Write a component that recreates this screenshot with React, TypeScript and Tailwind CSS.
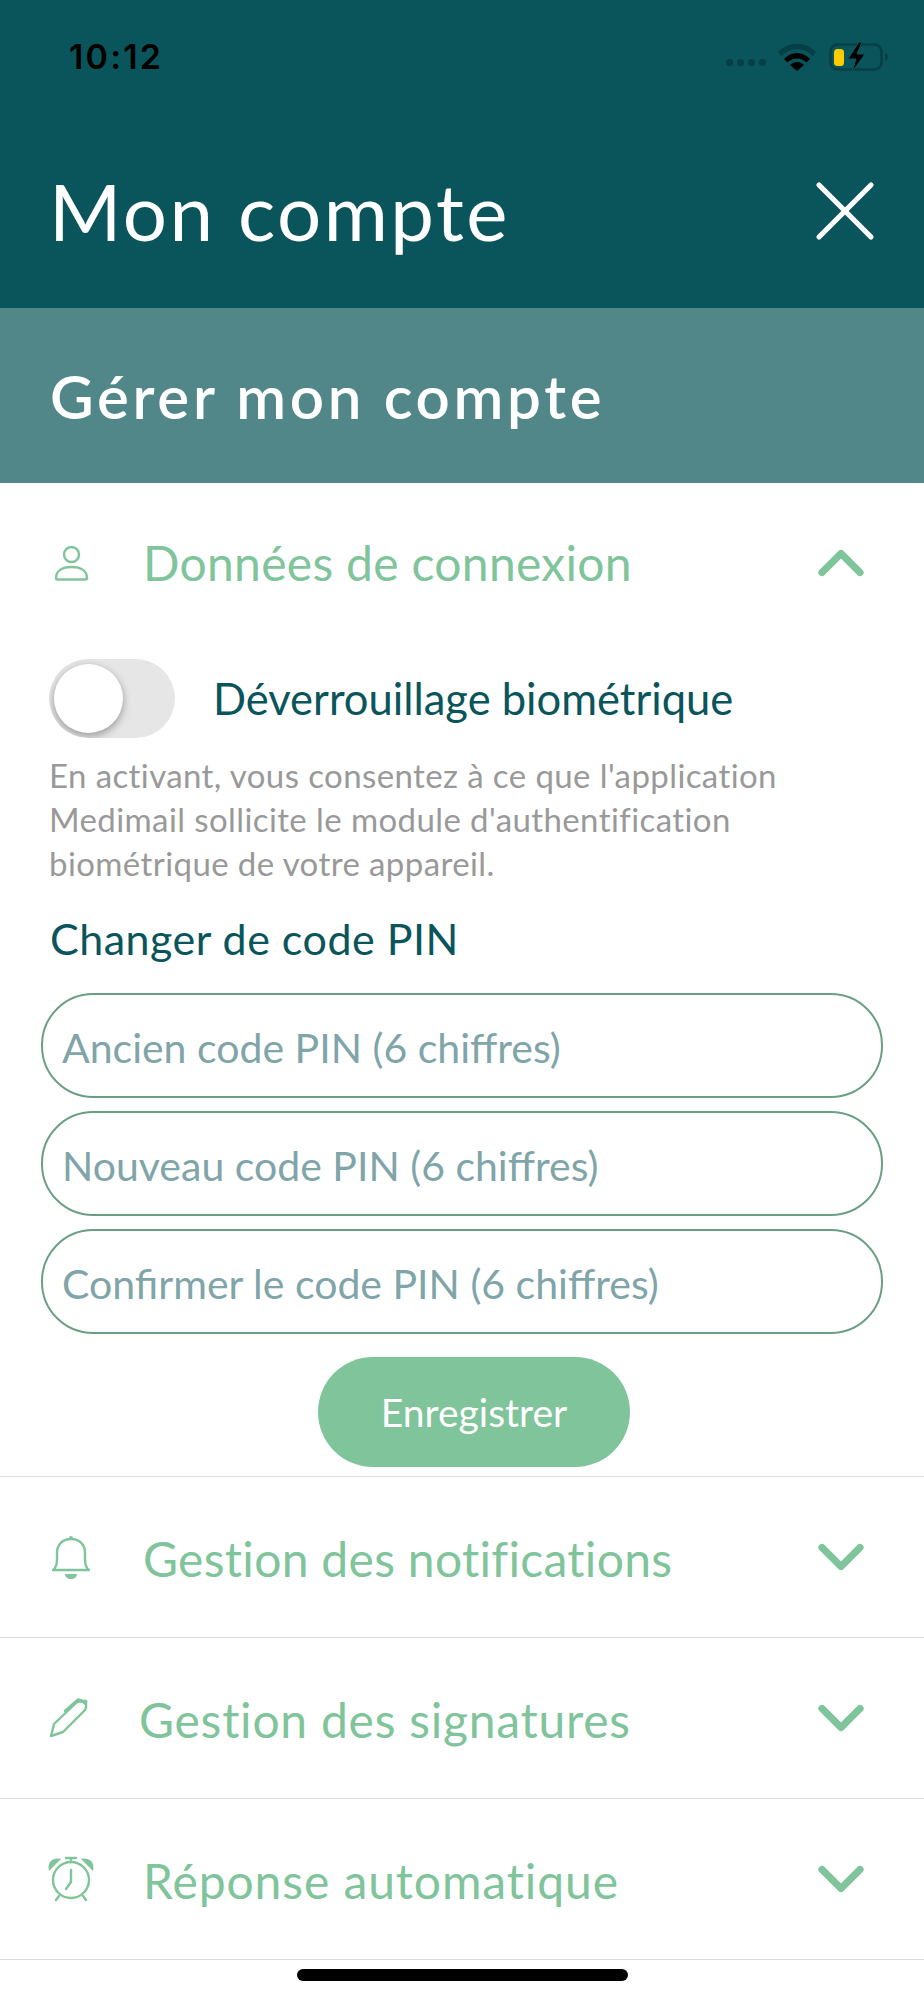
import { ChevronDown, ChevronUp, X } from "lucide-react";
import { ReactNode } from "react";

const UserIcon = () => (
  <svg width="35" height="36" viewBox="0 0 35 36" fill="none" stroke="#7fc49a" strokeWidth="2.4">
    <circle cx="17.5" cy="9.5" r="7.5" />
    <path d="M2 33c0-7 6-11 15.500-11S33 26 33 33c0 1-.5 1.500-1.500 1.500h-28C2.500 34.500 2 34 2 33z" strokeLinejoin="round" />
  </svg>
);

const BellIcon = () => (
  <svg width="38" height="45" viewBox="0 0 38 45" fill="none" stroke="#7fc49a" strokeWidth="2.4">
    <path d="M1 35h36c-3-2-4-5-4-11v-6C33 9 27 4 19 4S5 9 5 18v6c0 6-1 9-4 11z" strokeLinejoin="round" />
    <circle cx="19" cy="3" r="2" fill="#7fc49a" stroke="none" />
    <path d="M13 39h12c0 3-3 5-6 5s-6-2-6-5z" fill="#7fc49a" stroke="none" />
  </svg>
);

const PenIcon = () => (
  <svg width="40" height="40" viewBox="0 0 40 40" fill="none" stroke="#7fc49a" strokeWidth="2.4" strokeLinejoin="round" strokeLinecap="round" className="-ml-[5px]">
    <path d="M2 38l3-12L27 5c2-2 7-2 9 0 2 2 1 5 0 7L14 34z" />
    <path d="M16 13L29 1.500l4 1" />
    <circle cx="36" cy="4" r="2.500" fill="#7fc49a" stroke="none" />
  </svg>
);

const AlarmIcon = () => (
  <svg width="46" height="46" viewBox="0 0 46 46" fill="none" stroke="#7fc49a" strokeWidth="2.4" strokeLinecap="round">
    <circle cx="23" cy="24" r="18" />
    <path d="M23 14v12l-5 7" />
    <path d="M18 2h10M23 2v4" />
    <path d="M11 40l-3 4M35 40l3 4" />
    <path d="M1 15C-1 7 4 1 13 3z" fill="#7fc49a" stroke="none" />
    <path d="M45 15c2-8-3-14-12-12z" fill="#7fc49a" stroke="none" />
  </svg>
);

const AccordionRow = ({ icon, title, open, textClass }: { icon: ReactNode; title: string; open?: boolean; textClass: string }) => (
  <div className="flex items-center h-[160px] pl-[48px] pr-[45px] text-[#7fc49a]">
    <div className="w-[46px] flex justify-center shrink-0">{icon}</div>
    <span className={`text-[48px] leading-none ${textClass}`}>{title}</span>
    <span className="ml-auto">
      {open ? <ChevronUp size={76} strokeWidth={2.3} /> : <ChevronDown size={76} strokeWidth={2.3} />}
    </span>
  </div>
);

const PinInput = ({ placeholder }: { placeholder: string }) => (
  <input
    placeholder={placeholder}
    className="w-full h-[105px] rounded-[52px] border-[2.5px] border-[#6a9f83] pl-[19px] pt-[3px] text-[41px] bg-white outline-none placeholder:text-[#7fa5a9]"
  />
);

export default function App() {
  return (
    <div className="relative w-[924px] h-[2000px] bg-white overflow-hidden font-['Lato',sans-serif]">
      <header className="h-[308px] bg-[#0a555b] text-white">
        <div className="flex items-center justify-between h-[113px] pl-[69px] pr-[36px]">
          <span className="text-[34px] font-semibold text-black font-['Inter',sans-serif] tracking-[2.2px]">10:12</span>
          <div className="flex items-center">
            <div className="flex gap-[4px] mt-[12px] mr-[12px]">
              <i className="w-[7px] h-[7px] rounded-full bg-[#063f45]" />
              <i className="w-[7px] h-[7px] rounded-full bg-[#063f45]" />
              <i className="w-[7px] h-[7px] rounded-full bg-[#063f45]" />
              <i className="w-[7px] h-[7px] rounded-full bg-[#063f45]" />
            </div>
            <svg width="38" height="28" viewBox="0 0 38 28" className="mr-[13px]">
              <path d="M0 9C10-2 28-2 38 9l-3.500 4C26 4 12 4 3.500 13z" fill="#063f45" />
              <path d="M6 16C13 8 25 8 32 16l-3.500 3.500C23 14 15 14 9.500 19.500z" fill="#000" />
              <path d="M12 22c4-4 10-4 14 0l-7 6z" fill="#000" />
            </svg>
            <svg width="59" height="30" viewBox="0 0 59 30">
              <rect x="1.500" y="2.500" width="51" height="25" rx="7" fill="none" stroke="#063f45" strokeWidth="2.500" />
              <path d="M56 11c2 1 3 2.500 3 4s-1 3-3 4z" fill="#063f45" />
              <rect x="5" y="7" width="10" height="17" rx="3.500" fill="#ffcc00" />
              <path d="M30 0L19 17h8l-4 13 13-18h-8l5-12z" fill="#000" stroke="#0a555b" strokeWidth="1" />
            </svg>
          </div>
        </div>
        <div className="flex items-center justify-between h-[96px] pl-[49px] pr-[27px] mt-[50px]">
          <h1 className="text-[78px] leading-none tracking-[2.5px]">Mon compte</h1>
          <X size={104} strokeWidth={1.2} />
        </div>
      </header>

      <div className="flex items-center h-[175px] bg-[#528789] pl-[50px]">
        <h2 className="text-[60px] leading-none font-semibold text-white tracking-[3.7px]">Gérer mon compte</h2>
      </div>

      <AccordionRow icon={<UserIcon />} title="Données de connexion" open textClass="ml-[49px] tracking-[0.3px]" />

      <div className="mt-[16px] px-[41px]">
        <div className="flex items-center pl-[8px]">
          <div className="relative w-[126px] h-[79px] rounded-full bg-[#e6e6e6] overflow-hidden shrink-0">
            <div className="absolute left-[5px] top-[5px] w-[69px] h-[69px] rounded-full bg-white shadow-[0_3px_8px_rgba(0,0,0,0.35)]" />
          </div>
          <span className="ml-[38px] text-[43.5px] leading-none text-[#0a555b]">Déverrouillage biométrique</span>
        </div>
        <p className="mt-[15px] pl-[8px] text-[33px] leading-[44px] tracking-[0.4px] text-[#999999]">
          En activant, vous consentez à ce que l'application
          <br />
          Medimail sollicite le module d'authentification
          <br />
          biométrique de votre appareil.
        </p>
        <p className="mt-[30px] pl-[9px] text-[43px] leading-[48px] tracking-[0.5px] text-[#0a555b]">Changer de code PIN</p>
        <div className="mt-[30px] flex flex-col gap-[13px] w-[842px]">
          <PinInput placeholder="Ancien code PIN (6 chiffres)" />
          <PinInput placeholder="Nouveau code PIN (6 chiffres)" />
          <PinInput placeholder="Confirmer le code PIN (6 chiffres)" />
        </div>
        <div className="flex justify-center mt-[23px] w-[866px]">
          <button className="w-[312px] h-[110px] rounded-[55px] bg-[#7fc49a] text-white text-[39px]">Enregistrer</button>
        </div>
      </div>

      <div className="mt-[9px] border-t-[1.5px] border-[#dcdcdc]">
        <AccordionRow icon={<BellIcon />} title="Gestion des notifications" textClass="ml-[49px] mt-[3px] tracking-[0.3px]" />
      </div>
      <div className="border-t-[1.5px] border-[#dcdcdc]">
        <AccordionRow icon={<PenIcon />} title="Gestion des signatures" textClass="ml-[45px] mt-[3px] tracking-[0.75px]" />
      </div>
      <div className="border-t-[1.5px] border-[#dcdcdc]">
        <AccordionRow icon={<AlarmIcon />} title="Réponse automatique" textClass="ml-[49px] mt-[3px] tracking-[0.9px]" />
      </div>
      <div className="border-t-[1.5px] border-[#dcdcdc]" />

      <div className="absolute left-[297px] top-[1969px] w-[331px] h-[12px] rounded-full bg-black" />
    </div>
  );
}
